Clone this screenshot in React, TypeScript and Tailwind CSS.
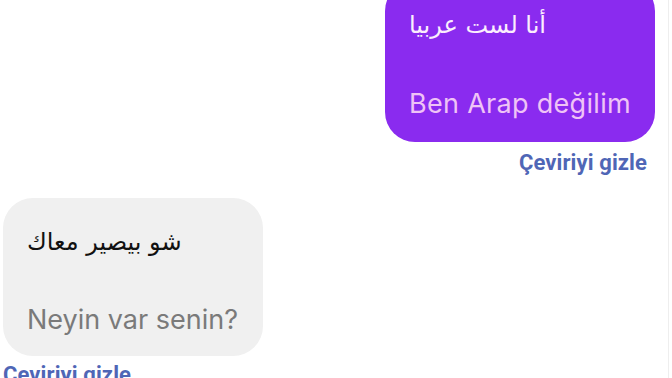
import React from "react";

export default function App() {
  return (
    <div className="w-[672px] h-[378px] overflow-hidden bg-white">
      <div className="w-[669px] h-full border-r border-[#eeeeee] flex flex-col">
        <div className="flex flex-col items-end pr-[13px]">
          <div className="-mt-[19px] w-[270px] rounded-[30px] bg-[#8a2bef] pl-[24px] pr-[10px] pt-[24px] pb-[20px] flex flex-col">
            <div
              dir="rtl"
              className="self-start h-[40px] leading-[40px] text-[24px] text-[#fbeefd]"
              style={{ fontFamily: '"DejaVu Sans", sans-serif' }}
            >
              أنا لست عربيا
            </div>
            <div className="mt-[41px] h-[36px] leading-[36px] text-[27px] tracking-[0.3px] text-[#efc3f6] font-['Inter',sans-serif] whitespace-nowrap">
              Ben Arap değilim
            </div>
          </div>
          <div className="mt-[10px] mr-[8px] h-[22px] leading-[22px] text-[22px] tracking-[0.1px] font-bold text-[#4f66b6] font-['Roboto',sans-serif] whitespace-nowrap">
            Çeviriyi gizle
          </div>
        </div>
        <div className="flex flex-col items-start pl-[3px] mt-[24px]">
          <div className="w-[260px] h-[158px] rounded-[30px] bg-[#f0f0f0] pl-[24px] pr-[10px] pt-[24px] flex flex-col">
            <div
              dir="rtl"
              className="self-start h-[40px] leading-[40px] text-[24px] text-[#111111]"
              style={{ fontFamily: '"DejaVu Sans", sans-serif' }}
            >
              شو بيصير معاك
            </div>
            <div className="mt-[40px] h-[36px] leading-[36px] text-[27px] text-[#7a7a7a] font-['Inter',sans-serif] whitespace-nowrap">
              Neyin var senin?
            </div>
          </div>
          <div className="mt-[8px] h-[22px] leading-[22px] text-[22px] tracking-[0.1px] font-bold text-[#4f66b6] font-['Roboto',sans-serif] whitespace-nowrap">
            Çeviriyi gizle
          </div>
        </div>
      </div>
    </div>
  );
}
